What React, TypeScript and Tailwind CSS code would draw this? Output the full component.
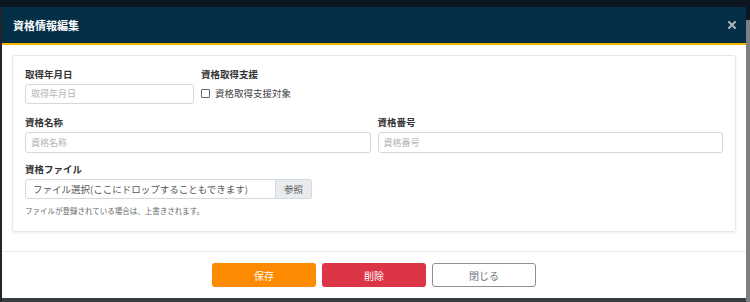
import React from "react";

const font = { fontFamily: '"Noto Sans CJK JP", "Noto Sans", sans-serif' };

export default function App() {
  return (
    <div className="w-[750px] h-[302px] bg-[#3a3d40] overflow-hidden flex flex-col" style={font}>
      <div className="h-[7px] bg-[#0b1620] shrink-0" />
      <div className="flex flex-1 min-h-0">
        <div className="w-[2px] bg-[#20262c]" />
        <div className="w-[744px] h-[291px] bg-white flex flex-col">
          <div className="h-[38px] bg-[#052f47] border-b-2 border-[#f5b400] flex items-center justify-between pl-[11px] pr-[9px] shrink-0">
            <span className="text-white text-[11px] font-bold leading-none">資格情報編集</span>
            <svg width="8" height="8" viewBox="0 0 8 8" className="mr-[1px]">
              <path d="M1 1 L7 7 M7 1 L1 7" stroke="#aab6bf" strokeWidth="2" strokeLinecap="square" />
            </svg>
          </div>
          <div className="px-[10px] pt-[10px] pb-[19px] border-b border-[#e9ecef]">
            <div className="border border-[#e3e6ea] rounded-[3px] shadow-[0_1px_2px_rgba(0,0,0,0.08)] pl-[12px] pr-[12px] pt-[11px] pb-[14px] text-[#333]">
              <div className="flex gap-[7px]">
                <div className="w-[169px]">
                  <div className="text-[9.5px] font-bold leading-[14px] mb-[3px]">取得年月日</div>
                  <div className="h-[20px] border border-[#d5d9de] rounded-[3px] flex items-center px-[5px] text-[9px] text-[#b0b4b8]">取得年月日</div>
                </div>
                <div>
                  <div className="text-[9.5px] font-bold leading-[14px] mb-[3px]">資格取得支援</div>
                  <div className="h-[20px] flex items-center gap-[5px] -mt-[1px]">
                    <div className="w-[9px] h-[9px] border border-[#666] rounded-[1px]" />
                    <span className="text-[9.5px] text-[#444]">資格取得支援対象</span>
                  </div>
                </div>
              </div>
              <div className="grid grid-cols-2 gap-[7px] mt-[11px]">
                <div>
                  <div className="text-[9.5px] font-bold leading-[14px] mb-[3px]">資格名称</div>
                  <div className="h-[21px] border border-[#d5d9de] rounded-[3px] flex items-center px-[5px] text-[9px] text-[#b0b4b8]">資格名称</div>
                </div>
                <div>
                  <div className="text-[9.5px] font-bold leading-[14px] mb-[3px]">資格番号</div>
                  <div className="h-[21px] border border-[#d5d9de] rounded-[3px] flex items-center px-[5px] text-[9px] text-[#b0b4b8]">資格番号</div>
                </div>
              </div>
              <div className="mt-[9px]">
                <div className="text-[9.5px] font-bold leading-[14px] mb-[3px]">資格ファイル</div>
                <div className="flex w-[287px] h-[20px]">
                  <div className="w-[251px] border border-[#d5d9de] rounded-l-[3px] flex items-center pl-[7px] text-[9.5px] text-[#555]">ファイル選択(ここにドロップすることもできます)</div>
                  <div className="flex-1 bg-[#e9ecef] border border-l-0 border-[#d5d9de] rounded-r-[3px] flex items-center justify-center text-[9.5px] text-[#555]">参照</div>
                </div>
                <div className="text-[7.5px] text-[#666] mt-[6px] leading-[12px]">ファイルが登録されている場合は、上書きされます。</div>
              </div>
            </div>
          </div>
          <div className="flex-1 flex items-center justify-center gap-[6px]">
            <div className="w-[104px] h-[24px] rounded-[3px] bg-[#fd8a00] text-white text-[10px] flex items-center justify-center">保存</div>
            <div className="w-[104px] h-[24px] rounded-[3px] bg-[#dc3545] text-white text-[10px] flex items-center justify-center">削除</div>
            <div className="w-[104px] h-[24px] rounded-[3px] border border-[#8a9096] text-[#6c757d] text-[10px] flex items-center justify-center">閉じる</div>
          </div>
        </div>
        <div className="w-[4px] flex flex-col bg-[#2a2e32]">
          <div className="h-[13px] bg-[#0b1620]" />
          <div className="flex-1 w-[4px] bg-[#7d7f82]" />
        </div>
      </div>
    </div>
  );
}
